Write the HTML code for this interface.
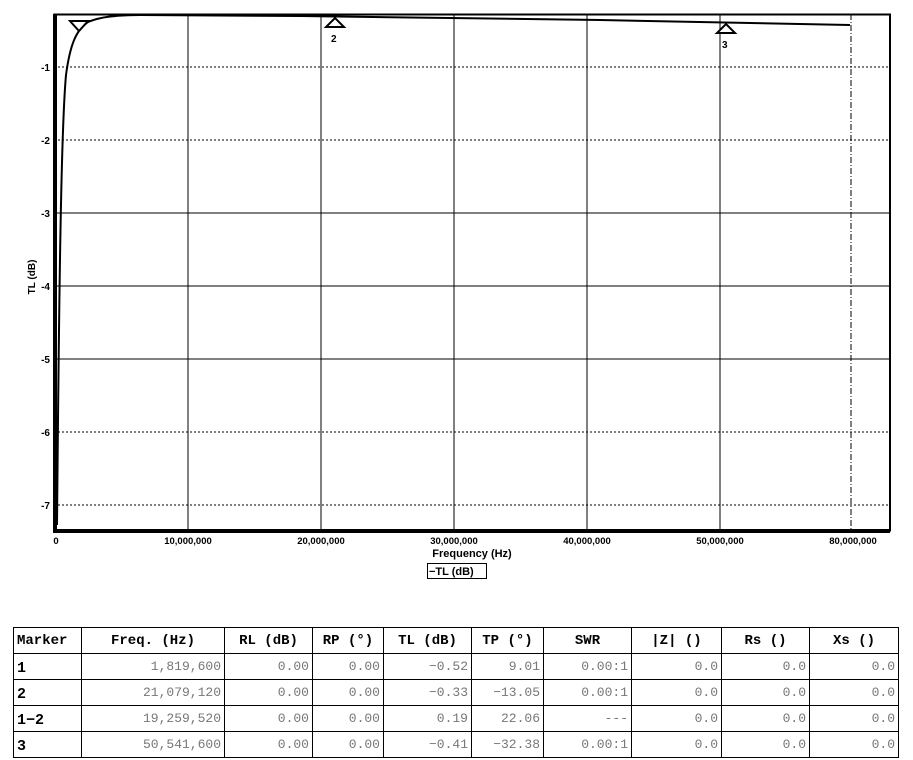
<!DOCTYPE html>
<html><head><meta charset="utf-8"><style>
body{margin:0;background:#fff;width:913px;height:760px;overflow:hidden;position:relative;font-family:"Liberation Sans",sans-serif}
svg{position:absolute;left:0;top:0}
table{position:absolute;left:13px;top:627px;border-collapse:collapse;font-family:"Liberation Mono",monospace}
td{border:1px solid #000;height:25px;padding:0 3px;font-size:13px;color:#777;text-align:right;white-space:nowrap}
tr.h td{font-weight:bold;color:#000;text-align:center;font-size:14px}
td.m{color:#000;font-weight:bold;text-align:left;font-size:15px;padding-top:4px;height:21px}
</style></head><body>
<svg width="913" height="600" viewBox="0 0 913 600">
<g stroke="#000" stroke-width="1" shape-rendering="crispEdges">
<line x1="54" y1="67" x2="890" y2="67" stroke-dasharray="2,2"/>
<line x1="54" y1="140" x2="890" y2="140" stroke-dasharray="2,2"/>
<line x1="54" y1="213" x2="890" y2="213"/>
<line x1="54" y1="286" x2="890" y2="286"/>
<line x1="54" y1="359" x2="890" y2="359"/>
<line x1="54" y1="432" x2="890" y2="432" stroke-dasharray="2,2"/>
<line x1="54" y1="505" x2="890" y2="505" stroke-dasharray="2,2"/>
<line x1="188" y1="14" x2="188" y2="531"/>
<line x1="321" y1="14" x2="321" y2="531"/>
<line x1="454" y1="14" x2="454" y2="531"/>
<line x1="587" y1="14" x2="587" y2="531"/>
<line x1="720" y1="14" x2="720" y2="531"/>
<line x1="851" y1="14" x2="851" y2="531" stroke-dasharray="6,2,1,2"/>
<rect x="54.5" y="14.5" width="835.5" height="516" fill="none" stroke-width="2"/>
<line x1="55" y1="14" x2="55" y2="533" stroke-width="4"/>
<line x1="53" y1="531" x2="890" y2="531" stroke-width="4"/>
</g>
<path d="M57,525 C59,300 61,130 66,75 C70,45 76,30 88,22 C100,17 115,15 140,15 L300,16 L600,20 L850,25" fill="none" stroke="#000" stroke-width="2"/>
<g fill="#fff" stroke="#000" stroke-width="2">
<path d="M70,21 L88,21 L79,31 Z"/>
<path d="M326,27 L344,27 L335,18 Z"/>
<path d="M717,33 L735,33 L726,24 Z"/>
</g>
<g font-family="Liberation Sans,sans-serif" font-weight="bold" font-size="10" fill="#000">
<text x="331" y="42">2</text><text x="722" y="48">3</text>
<g text-anchor="end"><text x="50" y="71">-1</text><text x="50" y="144">-2</text><text x="50" y="217">-3</text><text x="50" y="290">-4</text><text x="50" y="363">-5</text><text x="50" y="436">-6</text><text x="50" y="509">-7</text></g>
<g font-size="9.5" text-anchor="middle"><text x="56" y="544">0</text><text x="188" y="544">10,000,000</text><text x="321" y="544">20,000,000</text><text x="454" y="544">30,000,000</text><text x="587" y="544">40,000,000</text><text x="720" y="544">50,000,000</text><text x="853" y="544">80,000,000</text></g>
<text x="472" y="557" text-anchor="middle" font-size="11">Frequency (Hz)</text>
<text transform="translate(35,277) rotate(-90)" text-anchor="middle" font-size="10">TL (dB)</text>
<rect x="427.5" y="563.5" width="59" height="15" fill="#fff" stroke="#000"/>
<text x="429" y="575" font-size="11">−TL (dB)</text>
</g>
</svg>
<table>
<tr class="h"><td style="width:61px;text-align:left">Marker</td><td style="width:136px">Freq. (Hz)</td><td style="width:81px">RL (dB)</td><td style="width:64px">RP (°)</td><td style="width:81px">TL (dB)</td><td style="width:65px">TP (°)</td><td style="width:81px">SWR</td><td style="width:83px">|Z| ()</td><td style="width:81px">Rs ()</td><td style="width:82px">Xs ()</td></tr>
<tr><td class="m">1</td><td>1,819,600</td><td>0.00</td><td>0.00</td><td>−0.52</td><td>9.01</td><td>0.00:1</td><td>0.0</td><td>0.0</td><td>0.0</td></tr>
<tr><td class="m">2</td><td>21,079,120</td><td>0.00</td><td>0.00</td><td>−0.33</td><td>−13.05</td><td>0.00:1</td><td>0.0</td><td>0.0</td><td>0.0</td></tr>
<tr><td class="m">1−2</td><td>19,259,520</td><td>0.00</td><td>0.00</td><td>0.19</td><td>22.06</td><td>---</td><td>0.0</td><td>0.0</td><td>0.0</td></tr>
<tr><td class="m">3</td><td>50,541,600</td><td>0.00</td><td>0.00</td><td>−0.41</td><td>−32.38</td><td>0.00:1</td><td>0.0</td><td>0.0</td><td>0.0</td></tr>
</table>
</body></html>
